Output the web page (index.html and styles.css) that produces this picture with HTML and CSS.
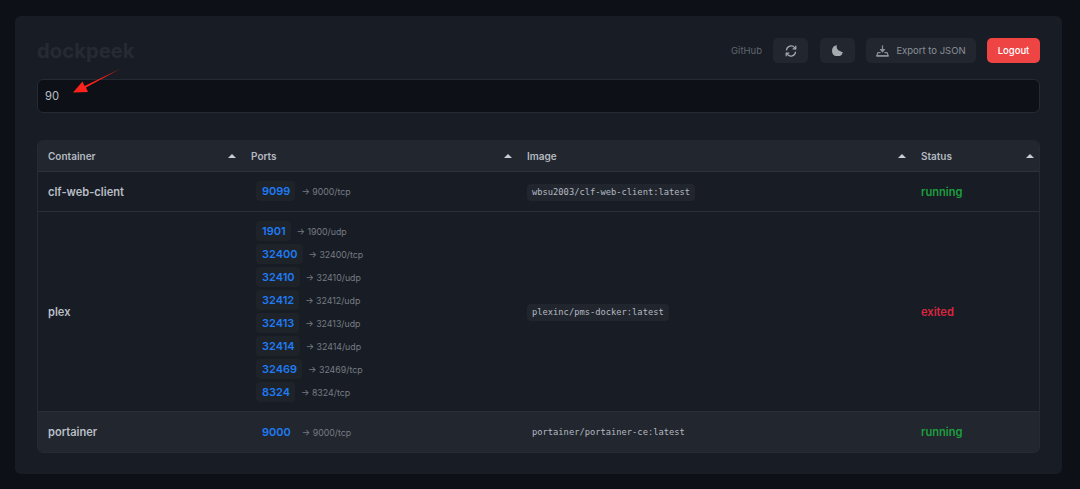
FILE: index.html
```html
<!DOCTYPE html>
<html lang="en">
<head>
<meta charset="utf-8">
<title>dockpeek</title>
<link rel="stylesheet" href="styles.css">
</head>
<body>
<main class="card">
  <header class="top">
    <h1 class="logo">dockpeek</h1>
    <nav class="actions">
      <a class="gh">GitHub</a>
      <button class="btn icon-btn refresh" aria-label="Refresh">
        <svg width="12" height="12" viewBox="0 0 16 16" fill="none" stroke="currentColor" stroke-width="1.6" stroke-linecap="round" stroke-linejoin="round"><path d="M2 6.6A6.2 6.2 0 0 1 12.8 3.4L14 4.8"/><path d="M14.4 1.6V5.2H10.8"/><path d="M14 9.4A6.2 6.2 0 0 1 3.2 12.6L2 11.2"/><path d="M1.6 14.4V10.8H5.2"/></svg>
      </button>
      <button class="btn icon-btn moon" aria-label="Theme">
        <svg width="11" height="11" viewBox="0 0 16 16" fill="currentColor"><path d="M7.4.4A8 8 0 1 0 15.8 10.4 6 6 0 0 1 11.6 8.8 6 6 0 0 1 7.4.4Z"/></svg>
      </button>
      <button class="btn export">
        <svg width="13" height="12" viewBox="0 0 16 15" fill="none" stroke="currentColor" stroke-width="1.5" stroke-linecap="round" stroke-linejoin="round"><path d="M8 1V7"/><path d="M5.4 5.6H10.6L8 8.6Z" fill="currentColor"/><path d="M5 9.6H2.2L1 13.4H15L13.8 9.6H11"/><path d="M1 13.6H15" stroke-width="2"/></svg>
        Export to JSON
      </button>
      <button class="btn logout">Logout</button>
    </nav>
  </header>
  <input class="search" type="text" value="90" aria-label="Search">
  <svg class="pointer" width="60" height="36" viewBox="0 0 60 36"><path d="M48 1 14 19.5 16 24 1 24.5 10.5 13.5 12.5 18Z" fill="#fb231c"/></svg>
  <div class="table-wrap">
    <table class="grid">
      <colgroup><col class="c1"><col class="c2"><col class="c3"><col class="c4"></colgroup>
      <thead>
        <tr>
          <th><span class="th-in">Container<i class="sort"></i></span></th>
          <th><span class="th-in">Ports<i class="sort"></i></span></th>
          <th><span class="th-in">Image<i class="sort"></i></span></th>
          <th><span class="th-in">Status<i class="sort"></i></span></th>
        </tr>
      </thead>
      <tbody>
        <tr>
          <td class="name">clf-web-client</td>
          <td class="port-cell"><div class="ports">
            <div class="port"><span class="pub">9099</span><span class="map">→ 9000/tcp</span></div>
          </div></td>
          <td><code class="img">wbsu2003/clf-web-client:latest</code></td>
          <td class="ok">running</td>
        </tr>
        <tr class="tall">
          <td class="name">plex</td>
          <td class="port-cell"><div class="ports">
            <div class="port"><span class="pub">1901</span><span class="map">→ 1900/udp</span></div>
            <div class="port"><span class="pub">32400</span><span class="map">→ 32400/tcp</span></div>
            <div class="port"><span class="pub">32410</span><span class="map">→ 32410/udp</span></div>
            <div class="port"><span class="pub">32412</span><span class="map">→ 32412/udp</span></div>
            <div class="port"><span class="pub">32413</span><span class="map">→ 32413/udp</span></div>
            <div class="port"><span class="pub">32414</span><span class="map">→ 32414/udp</span></div>
            <div class="port"><span class="pub">32469</span><span class="map">→ 32469/tcp</span></div>
            <div class="port"><span class="pub">8324</span><span class="map">→ 8324/tcp</span></div>
          </div></td>
          <td><code class="img">plexinc/pms-docker:latest</code></td>
          <td class="bad">exited</td>
        </tr>
        <tr class="hover">
          <td class="name">portainer</td>
          <td class="port-cell"><div class="ports">
            <div class="port"><span class="pub">9000</span><span class="map">→ 9000/tcp</span></div>
          </div></td>
          <td><code class="img">portainer/portainer-ce:latest</code></td>
          <td class="ok">running</td>
        </tr>
      </tbody>
    </table>
  </div>
</main>
</body>
</html>
```
FILE: styles.css
```css
* { box-sizing: border-box; }
html, body { margin: 0; height: 100%; }
body {
  background: #0d1117;
  font-family: Inter, "Liberation Sans", sans-serif;
  padding: 16px 18px 15px 15px;
  overflow: hidden;
}
.card {
  position: relative;
  height: 458px;
  background: #181c24;
  border-radius: 6px;
  padding: 22px 22px 0;
}
.top {
  display: flex;
  justify-content: space-between;
  align-items: center;
  height: 25px;
}
.logo {
  margin: 0;
  font-size: 20.3px;
  font-weight: 700;
  color: #262b33;
  line-height: 25px;
}
.actions { display: flex; align-items: center; }
.gh { font-size: 9.5px; color: #5f666f; margin-right: 11px; }
.btn {
  height: 25px;
  border: 0;
  border-radius: 5px;
  background: #22262e;
  color: #8a9099;
  font-family: inherit;
  font-size: 9.5px;
  display: flex;
  align-items: center;
  justify-content: center;
  padding: 0;
}
.icon-btn { width: 35px; color: #a6abb2; }
.refresh { margin-right: 12px; }
.moon { margin-right: 11px; }
.export { width: 110px; gap: 7px; margin-right: 11px; }
.logout { width: 53px; background: #ef4444; color: #fff; font-weight: 500; }
.search {
  display: block;
  width: 100%;
  height: 34px;
  margin-top: 16px;
  background: #0d1117;
  border: 1px solid #262b33;
  border-radius: 6px;
  padding: 0 7px;
  color: #b9bec5;
  font-family: inherit;
  font-size: 11.2px;
  outline: none;
}
.pointer { position: absolute; left: 57px; top: 52px; }
.table-wrap {
  margin-top: 27px;
  border: 1px solid #262b33;
  border-top: 0;
  border-radius: 6px;
  overflow: hidden;
}
.grid { width: 100%; border-collapse: collapse; table-layout: fixed; }
.c1 { width: 203px; }
.c2 { width: 276px; }
.c3 { width: 394px; }
th {
  height: 31px;
  background: #22262e;
  border-bottom: 1px solid #2d323a;
  padding: 1px 10px 0;
  text-align: left;
  font-size: 10px;
  font-weight: 600;
  color: #b4b9c0;
}
.th-in { display: flex; align-items: center; justify-content: space-between; }
.sort {
  width: 0;
  height: 0;
  border-left: 4px solid transparent;
  border-right: 4px solid transparent;
  border-bottom: 4px solid #c9ced4;
  margin-right: -5px;
}
td {
  padding: 11px 10px 9px;
  border-bottom: 1px solid #2a2f37;
  font-size: 10.5px;
  color: #b4b9c0;
  vertical-align: middle;
}
.port-cell { padding: 9px 10px 10px; }
.tall .port-cell { padding-bottom: 9px; }
tbody tr:last-child td { border-bottom: 0; padding-top: 10px; }
.hover td { background: #22262e; }
.name { font-size: 11.1px; font-weight: 600; color: #b9bec5; }
.ports { display: flex; flex-direction: column; gap: 3px; padding-left: 5px; }
.port { display: flex; align-items: center; height: 20px; }
.pub {
  padding: 0 5px 0 6px;
  height: 20px;
  line-height: 20px;
  border-radius: 4px;
  background: #1e2229;
  color: #1f7bf2;
  font-size: 11px;
  font-weight: 600;
}
.hover .pub { background: transparent; }
.map { margin-left: 6px; font-size: 8.8px; color: #767c84; position: relative; top: 1px; }
.img {
  display: inline-block;
  height: 17px;
  line-height: 17px;
  padding: 0 5px;
  border-radius: 4px;
  background: #21262e;
  color: #b4b9c0;
  font-family: "DejaVu Sans Mono", monospace;
  font-size: 8.75px;
}
.hover .img { background: transparent; }
.ok { color: #1e9e3e; font-size: 11.1px; font-weight: 600; }
.bad { color: #dc2640; font-size: 11.1px; font-weight: 600; }
```
